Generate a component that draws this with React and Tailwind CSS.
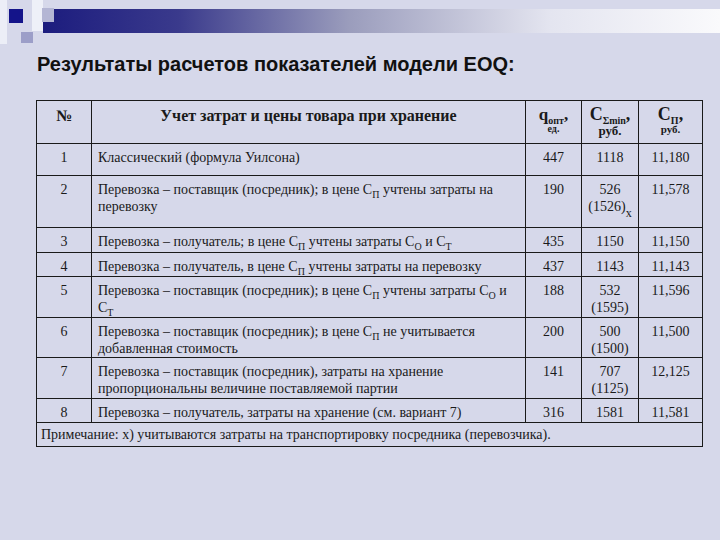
// EOQ results slide — table of calculated indicators.

const serif = { fontFamily: '"Liberation Serif", "Times New Roman", serif' };

function Sub({ children }) {
  return <span className="relative top-[4px] text-[10px] leading-none">{children}</span>;
}

function Cp() {
  return (
    <>
      С<Sub>П</Sub>
    </>
  );
}

const ROWS = [
  { n: "1", h: "h-[32px]", text: <>Классический (формула Уилсона)</>, q: "447", c: ["1118"], p: "11,180" },
  {
    n: "2",
    h: "h-[52px]",
    text: (
      <>
        Перевозка – поставщик (посредник); в цене <Cp /> учтены затраты на перевозку
      </>
    ),
    q: "190",
    c: ["526", "(1526)"],
    x: true,
    p: "11,578",
  },
  {
    n: "3",
    h: "h-[25px]",
    text: (
      <>
        Перевозка – получатель; в цене <Cp /> учтены затраты С<Sub>О</Sub> и С<Sub>Т</Sub>
      </>
    ),
    q: "435",
    c: ["1150"],
    p: "11,150",
  },
  {
    n: "4",
    h: "h-[24px]",
    text: (
      <>
        Перевозка – получатель, в цене <Cp /> учтены затраты на перевозку
      </>
    ),
    q: "437",
    c: ["1143"],
    p: "11,143",
  },
  {
    n: "5",
    h: "h-[41px]",
    text: (
      <>
        Перевозка – поставщик (посредник); в цене <Cp /> учтены затраты С<Sub>О</Sub> и С<Sub>Т</Sub>
      </>
    ),
    q: "188",
    c: ["532", "(1595)"],
    p: "11,596",
  },
  {
    n: "6",
    h: "h-[40px]",
    text: (
      <>
        Перевозка – поставщик (посредник); в цене <Cp /> не учитывается добавленная стоимость
      </>
    ),
    q: "200",
    c: ["500", "(1500)"],
    p: "11,500",
  },
  {
    n: "7",
    h: "h-[41px]",
    text: (
      <>
        Перевозка – поставщик (посредник), затраты на хранение пропорциональны величине поставляемой партии
      </>
    ),
    q: "141",
    c: ["707", "(1125)"],
    p: "12,125",
  },
  {
    n: "8",
    h: "h-[24px]",
    text: <>Перевозка – получатель, затраты на хранение (см. вариант 7)</>,
    q: "316",
    c: ["1581"],
    p: "11,581",
  },
];

function Decoration() {
  return (
    <svg className="absolute left-0 top-0" width="720" height="50" viewBox="0 0 720 50">
      <defs>
        <linearGradient id="bar" x1="0" x2="1" y1="0" y2="0">
          <stop offset="0" stopColor="#1c1c7e" />
          <stop offset="0.2" stopColor="#3a3a8c" />
          <stop offset="0.45" stopColor="#9a9cbc" />
          <stop offset="0.75" stopColor="#e4e5f0" />
          <stop offset="1" stopColor="#fafafc" />
        </linearGradient>
      </defs>
      <rect x="0" y="0" width="7" height="44" fill="#eceef7" />
      <rect x="32" y="0" width="11" height="31" fill="#eef0f8" />
      <rect x="43" y="9" width="677" height="24" fill="url(#bar)" />
      <rect x="42" y="8" width="12" height="14" fill="#b4b6d4" />
      <rect x="9" y="9" width="14" height="14" fill="#14148a" />
      <rect x="21" y="32" width="12" height="11" fill="#9c9ec8" />
    </svg>
  );
}

export default function App() {
  return (
    <div className="relative h-[540px] w-[720px] overflow-hidden bg-[#d6d8ea]">
      <Decoration />
      <div className="relative pl-[37px] pt-[52px]">
        <h1
          className="text-[20px] font-bold leading-[24px] text-[#111]"
          style={{ fontFamily: '"Liberation Sans", Arial, sans-serif' }}
        >
          Результаты расчетов показателей модели EOQ:
        </h1>
      </div>
      <div className="relative ml-[36px] mt-[24px] w-[666px]" style={serif}>
        <table className="w-full table-fixed border-collapse text-[14px] leading-[17px] text-[#1a1a1a]">
          <colgroup>
            <col className="w-[55px]" />
            <col className="w-[434px]" />
            <col className="w-[56px]" />
            <col className="w-[57px]" />
            <col className="w-[64px]" />
          </colgroup>
          <thead>
            <tr className="h-[43px]">
              <th className="border border-[#1a1a1a] pt-[6px] align-top text-[16px] font-bold">№</th>
              <th className="border border-[#1a1a1a] pt-[6px] align-top text-[16px] font-bold">
                Учет затрат и цены товара при хранение
              </th>
              <th className="border border-[#1a1a1a] pt-[6px] align-top font-bold">
                <div className="text-[17px] leading-[16px]">
                  q<Sub>опт</Sub>,
                </div>
                <div className="text-[10px] leading-[12px]">ед.</div>
              </th>
              <th className="border border-[#1a1a1a] pt-[5px] align-top font-bold">
                <div className="text-[18px] leading-[17px]">
                  С<Sub>Σmin</Sub>,
                </div>
                <div className="text-[13px] leading-[15px]">руб.</div>
              </th>
              <th className="border border-[#1a1a1a] pt-[5px] align-top font-bold">
                <div className="text-[18px] leading-[17px]">
                  С<Sub>П</Sub>,
                </div>
                <div className="text-[11px] leading-[13px]">руб.</div>
              </th>
            </tr>
          </thead>
          <tbody>
            {ROWS.map((r) => (
              <tr key={r.n} className={r.h}>
                <td className="border border-[#1a1a1a] pt-[5px] text-center align-top">{r.n}</td>
                <td className="border border-[#1a1a1a] px-[6px] pt-[5px] align-top">{r.text}</td>
                <td className="border border-[#1a1a1a] pt-[5px] text-center align-top">{r.q}</td>
                <td className="border border-[#1a1a1a] pt-[5px] text-center align-top">
                  {r.c.map((v, i) => (
                    <div key={i}>
                      {v}
                      {r.x && i === 1 && (
                        <span className="relative top-[6px] text-[12px] leading-none">x</span>
                      )}
                    </div>
                  ))}
                </td>
                <td className="border border-[#1a1a1a] pt-[5px] text-center align-top">{r.p}</td>
              </tr>
            ))}
            <tr className="h-[24px]">
              <td colSpan={5} className="border border-[#1a1a1a] px-[4px] align-middle">
                Примечание: x) учитываются затраты на транспортировку посредника (перевозчика).
              </td>
            </tr>
          </tbody>
        </table>
      </div>
    </div>
  );
}
